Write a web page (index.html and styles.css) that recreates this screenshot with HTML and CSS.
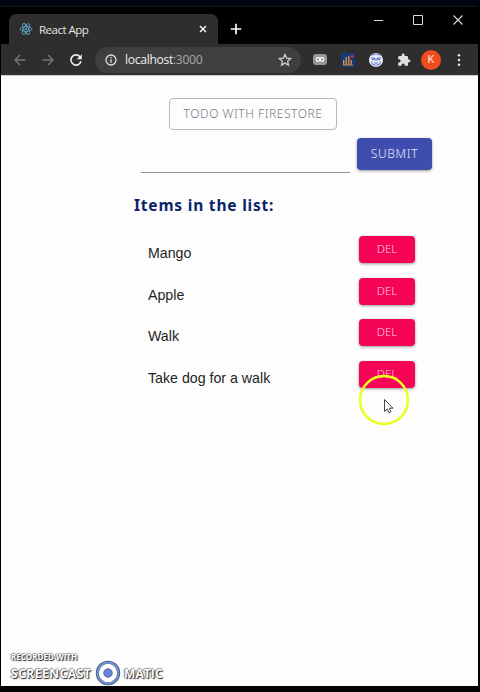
FILE: index.html
```html
<!DOCTYPE html>
<html lang="en">
<head>
<meta charset="utf-8">
<title>React App</title>
<link rel="stylesheet" href="styles.css">
</head>
<body>
<div class="window">
  <header class="tabs">
    <div class="tab">
      <svg class="react" viewBox="0 0 14 14" fill="none" stroke="#5f9fc0" stroke-width=".9"><ellipse cx="7" cy="7" rx="6" ry="2.4"/><ellipse cx="7" cy="7" rx="6" ry="2.4" transform="rotate(60 7 7)"/><ellipse cx="7" cy="7" rx="6" ry="2.4" transform="rotate(120 7 7)"/><circle cx="7" cy="7" r=".8" fill="#5f9fc0"/></svg>
      <span class="tab-title">React App</span>
      <svg class="close" viewBox="0 0 8 8" stroke="#f2f2f2" stroke-width="1.5"><path d="M1 1l6 6M7 1L1 7"/></svg>
    </div>
    <svg class="plus" viewBox="0 0 12 12" stroke="#fff" stroke-width="1.7"><path d="M6 .7v10.6M.7 6h10.6"/></svg>
    <div class="controls">
      <svg viewBox="0 0 10 10" stroke="#ddd" fill="none"><path d="M1 5.5h9"/></svg>
      <svg viewBox="0 0 10 10" stroke="#ddd" fill="none"><path d="M.5.5h9v9h-9z"/></svg>
      <svg viewBox="0 0 10 10" stroke="#ddd" fill="none" stroke-width="1.1"><path d="M.5.5l9 9M9.500.5l-9 9"/></svg>
    </div>
  </header>
  <nav class="toolbar">
    <svg class="nav" viewBox="0 0 12 12" fill="none" stroke="#777" stroke-width="1.4"><path d="M11.500 6H1M6 1L1 6l5 5"/></svg>
    <svg class="nav" viewBox="0 0 12 12" fill="none" stroke="#777" stroke-width="1.4"><path d="M.5 6H11M6 1l5 5-5 5"/></svg>
    <svg class="nav" viewBox="0 0 12 12" fill="none" stroke="#eee" stroke-width="1.6"><path d="M10.200 3A5.100 5.100 0 1 0 11 7.300"/><path d="M11.800.2v5H6.800z" fill="#eee" stroke="none"/></svg>
    <div class="address">
      <svg class="info" viewBox="0 0 12 12" fill="none" stroke="#ddd" stroke-width="1.3"><circle cx="6" cy="6" r="5"/><path d="M6 5.300v3.500M6 3v1.300"/></svg>
      <span class="url">localhost<span class="port">:3000</span></span>
      <svg class="star" viewBox="0 0 24 24" fill="none" stroke="#ccc" stroke-width="2.2"><path d="M12 2.500l2.800 6.300 6.900.7-5.200 4.600 1.500 6.700-6-3.500-6 3.500 1.500-6.700-5.200-4.600 6.900-.7z"/></svg>
    </div>
    <div class="extensions">
      <svg class="ext-link" viewBox="0 0 14 11"><rect width="14" height="11" rx="3" fill="#969696"/><g fill="none" stroke="#fff" stroke-width="1.2"><circle cx="5" cy="5.500" r="1.800"/><circle cx="9" cy="5.500" r="1.800"/></g></svg>
      <svg class="ext" viewBox="0 0 14 14"><rect width="14" height="14" rx="1.500" fill="#143b75"/><path d="M2.700 12V7M5.200 12V4M7.800 12V3M10.300 12V7" stroke="#e9973c" stroke-width="1.300"/><path d="M2 12h10" stroke="#ce8d4a"/><circle cx="11.200" cy="3.300" r="1.400" fill="#e42a3e"/></svg>
      <svg class="ext" viewBox="0 0 14 14"><circle cx="7" cy="7" r="7" fill="#eceffd"/><path d="M2 4.500l4 1M12 4.500l-4 1M3 2.500c2-2 6-2 8 0M2.500 8.500c.5 5 8.500 5 9 0M5 10h4M7 5v3" stroke="#6370c4" fill="none" stroke-width="1.100"/><path d="M3 6.700h2.500M8.500 6.700H11" stroke="#383f91"/></svg>
      <svg class="ext puzzle" viewBox="0 0 24 24" fill="#dedede"><path d="M20.500 11H19V7a2 2 0 0 0-2-2h-4V3.500a2.500 2.500 0 0 0-5 0V5H4a2 2 0 0 0-2 2v3.800h1.500a2.700 2.700 0 0 1 0 5.400H2V20a2 2 0 0 0 2 2h3.800v-1.500a2.700 2.700 0 0 1 5.400 0V22H17a2 2 0 0 0 2-2v-4h1.500a2.500 2.500 0 0 0 0-5z"/></svg>
      <span class="avatar">K</span>
      <svg class="dots" viewBox="0 0 4 14" fill="#e2e2e2"><circle cx="2" cy="2.300" r="1.300"/><circle cx="2" cy="7" r="1.300"/><circle cx="2" cy="11.700" r="1.300"/></svg>
    </div>
  </nav>
  <main class="page">
    <div class="title">TODO WITH FIRESTORE</div>
    <div class="entry"><div class="field"></div><div class="btn submit">SUBMIT</div></div>
    <h1 class="heading">Items in the list:</h1>
    <ul class="list">
      <li><span>Mango</span><div class="btn del">DEL</div></li>
      <li><span>Apple</span><div class="btn del">DEL</div></li>
      <li><span>Walk</span><div class="btn del">DEL</div></li>
      <li><span>Take dog for a walk</span><div class="btn del">DEL</div></li>
    </ul>
  </main>
</div>
<svg class="pointer" viewBox="0 0 52 52"><circle cx="26" cy="26" r="24" fill="none" stroke="#eaff1e" stroke-width="2.500"/><path d="M26.500 25.500v12l2.700-2.500 1.800 3.800 2-1-1.800-3.600h3.800z" fill="#fff" stroke="#444" stroke-width="1"/></svg>
<div class="watermark">
  <div class="recorded">RECORDED WITH</div>
  <div class="brand"><span class="cast">SCREENCAST</span><svg viewBox="0 0 26 26"><circle cx="13" cy="13" r="10.700" fill="#fff" stroke="#425579" stroke-width="3"/><circle cx="13" cy="13" r="10.500" fill="none" stroke="#7096d6" stroke-width="1.800"/><circle cx="13" cy="13" r="4.300" fill="#6684d8" stroke="#496096" stroke-width=".8"/></svg><span class="matic">MATIC</span></div>
</div>
</body>
</html>
```
FILE: styles.css
```css
* { box-sizing: border-box; }
body {
  margin: 0;
  width: 480px;
  height: 692px;
  overflow: hidden;
  background: #000;
  border-top: 6px solid #02040f;
  font-family: "Liberation Sans", sans-serif;
}
svg { display: block; flex: none; }
.window { width: 477px; margin-left: 1px; border-top: 1px solid #151515; }
.tabs { height: 37px; padding: 7px 0 0 8px; display: flex; }
.tab {
  width: 209px;
  height: 30px;
  padding: 0 11px 0 10px;
  display: flex;
  align-items: center;
  background: #2e2e2e;
  border-radius: 7px 7px 0 0;
}
.react { width: 14px; height: 14px; }
.tab-title {
  margin-left: 6px;
  flex: 1;
  font: 11.500px "Open Sans", sans-serif;
  letter-spacing: -.7px;
  letter-spacing: -.5px;
  color: #e5e5e5;
  white-space: nowrap;
}
.close { width: 8px; height: 8px; }
.plus { width: 12px; height: 12px; margin: 9px 0 0 12px; }
.controls { margin: 1px 15px 0 auto; display: flex; gap: 30px; }
.controls svg { width: 10px; height: 10px; }
.toolbar {
  height: 31px;
  padding: 0 18px 0 13px;
  display: flex;
  align-items: center;
  background: #2e2e2e;
}
.nav { width: 12px; height: 12px; margin-right: 16px; }
.address {
  width: 206px;
  height: 26px;
  margin-left: -3px;
  padding: 0 9px 0 10px;
  display: flex;
  align-items: center;
  border-radius: 13px;
  background: #3f3f3f;
}
.info { width: 12px; height: 12px; }
.url {
  flex: 1;
  margin-left: 8px;
  font: 12.100px "Open Sans", sans-serif;
  letter-spacing: -.3px;
  color: #f0f0f0;
}
.port { color: #a9a9a9; }
.star { width: 14px; height: 14px; }
.extensions { margin-left: 12px; flex: 1; display: flex; align-items: center; }
.ext-link { width: 14px; height: 11px; margin-right: 14px; }
.ext { width: 14px; height: 14px; margin-right: 14px; }
.puzzle { margin-right: 10px; }
.avatar {
  width: 20px;
  height: 20px;
  border-radius: 50%;
  background: #ef4c20;
  color: #ffe2d7;
  font: 11px/20px Roboto, sans-serif;
  text-align: center;
}
.dots { width: 4px; height: 14px; margin-left: auto; margin-right: -1px; }
.page {
  height: 611px;
  padding-top: 22px;
  border-top: 1px solid #cfcfcf;
  background: #fdfdfd;
}
.title {
  width: 168px;
  height: 32px;
  margin-left: 168px;
  border: 1px solid #b8b8b8;
  border-radius: 4px;
  font: 300 12px/30px "Noto Sans", sans-serif;
  letter-spacing: .55px;
  text-align: center;
  color: #777986;
  white-space: nowrap;
}
.entry { display: flex; margin: 8px 0 0 140px; }
.field { width: 209px; height: 35px; border-bottom: 1px solid #929292; }
.btn {
  border-radius: 4px;
  text-align: center;
  font: 300 12px/32px "Noto Sans", sans-serif;
  box-shadow: 0 1px 3px rgba(0, 0, 0, .4);
}
.submit { width: 75px; height: 32px; margin-left: 7px; background: #3f4eae; color: #e8ebff; letter-spacing: .7px; }
.heading {
  margin: 20px 0 0 133px;
  font: 700 15.500px/24px "Noto Sans", sans-serif;
  color: #0a246c;
  letter-spacing: .8px;
  white-space: nowrap;
}
.list { list-style: none; margin: 17px 0 0; padding: 0 0 0 147px; }
.list li { display: flex; height: 41.700px; padding-top: 2px; }
.list span { width: 211px; padding-top: 7px; font-size: 14.200px; line-height: 20px; color: #1f1f1f; }
.del { width: 56px; height: 27px; line-height: 26px; background: #f50357; color: #ffd2e1; font-size: 11.500px; letter-spacing: 0; }
.pointer { position: absolute; left: 358px; top: 374px; width: 52px; height: 52px; }
.watermark {
  position: absolute;
  left: 11px;
  top: 651px;
  color: #fff;
  font-family: "Open Sans", sans-serif;
  font-weight: 700;
  text-shadow: 1px 1px 1px #222, -1px 0 1px #777, 0 -1px 1px #999;
}
.recorded { font-size: 8px; line-height: 11px; }
.brand { display: flex; align-items: center; height: 22px; font-size: 12px; letter-spacing: .55px; }
.brand svg { width: 26px; height: 26px; margin: 0 3px; }
.cast { width: 81px; }
.matic { letter-spacing: .1px; }
```
